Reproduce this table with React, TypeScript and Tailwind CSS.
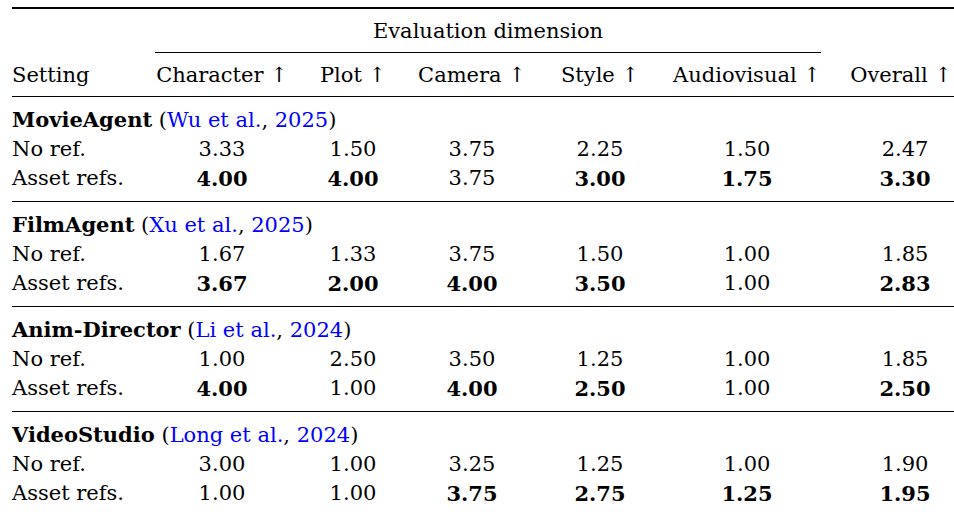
const columns = ["Character", "Plot", "Camera", "Style", "Audiovisual", "Overall"];

const groups = [
    {
        name: "MovieAgent",
        author: "Wu et al.",
        year: "2025",
        rows: [
            { setting: "No ref.", scores: ["3.33", "1.50", "3.75", "2.25", "1.50", "2.47"] },
            { setting: "Asset refs.", scores: ["*4.00", "*4.00", "3.75", "*3.00", "*1.75", "*3.30"] }
        ]
    },
    {
        name: "FilmAgent",
        author: "Xu et al.",
        year: "2025",
        rows: [
            { setting: "No ref.", scores: ["1.67", "1.33", "3.75", "1.50", "1.00", "1.85"] },
            { setting: "Asset refs.", scores: ["*3.67", "*2.00", "*4.00", "*3.50", "1.00", "*2.83"] }
        ]
    },
    {
        name: "Anim-Director",
        author: "Li et al.",
        year: "2024",
        rows: [
            { setting: "No ref.", scores: ["1.00", "2.50", "3.50", "1.25", "1.00", "1.85"] },
            { setting: "Asset refs.", scores: ["*4.00", "1.00", "*4.00", "*2.50", "1.00", "*2.50"] }
        ]
    },
    {
        name: "VideoStudio",
        author: "Long et al.",
        year: "2024",
        rows: [
            { setting: "No ref.", scores: ["3.00", "1.00", "3.25", "1.25", "1.00", "1.90"] },
            { setting: "Asset refs.", scores: ["1.00", "1.00", "*3.75", "*2.75", "*1.25", "*1.95"] }
        ]
    }
];

function Score({ value, last }: { value: string; last: boolean }) {
    const bold = value.startsWith("*");
    return (
        <td className={`text-center ${last ? "pl-[35px]" : ""} ${bold ? "font-bold" : ""}`}>
            {bold ? value.slice(1) : value}
        </td>
    );
}

export default function App() {
    return (
        <div className="min-h-screen bg-white pl-[12px] pt-[7px] text-black font-['DejaVu_Serif',serif] text-[21px] leading-[29px]">
            <table className="w-[942px] table-fixed border-collapse border-t-2 border-black">
                <colgroup>
                    <col className="w-[143px]" />
                    <col className="w-[134px]" />
                    <col className="w-[128px]" />
                    <col className="w-[110px]" />
                    <col className="w-[146px]" />
                    <col className="w-[148px]" />
                    <col className="w-[133px]" />
                </colgroup>
                <thead>
                    <tr>
                        <th className="pt-[8px] pb-[6px]" />
                        <th colSpan={5} className="pt-[8px] pb-[6px] font-normal text-center border-b border-black">
                            Evaluation dimension
                        </th>
                        <th className="pt-[8px] pb-[6px]" />
                    </tr>
                    <tr className="border-b border-black">
                        <th className="pt-[8px] pb-[6px] font-normal text-left">Setting</th>
                        {columns.map((col, i) => (
                            <th
                                key={col}
                                className={`pt-[8px] pb-[6px] font-normal whitespace-nowrap ${i === 5 ? "text-right pr-[2px]" : "text-center"}`}
                            >
                                {col} ↑
                            </th>
                        ))}
                    </tr>
                </thead>
                {groups.map((group, g) => (
                    <tbody key={group.name} className={g > 0 ? "border-t border-black" : ""}>
                        <tr>
                            <td colSpan={7} className="pt-[8px] text-left whitespace-nowrap">
                                <span className="font-bold">{group.name}</span> (
                                <span className="text-[#0000ff]">{group.author}</span>,{" "}
                                <span className="text-[#0000ff]">{group.year}</span>)
                            </td>
                        </tr>
                        {group.rows.map((row, r) => (
                            <tr key={row.setting} className={r === 1 && g < groups.length - 1 ? "[&>td]:pb-[8px]" : ""}>
                                <td className="text-left whitespace-nowrap">{row.setting}</td>
                                {row.scores.map((s, i) => (
                                    <Score key={i} value={s} last={i === 5} />
                                ))}
                            </tr>
                        ))}
                    </tbody>
                ))}
            </table>
        </div>
    );
}
